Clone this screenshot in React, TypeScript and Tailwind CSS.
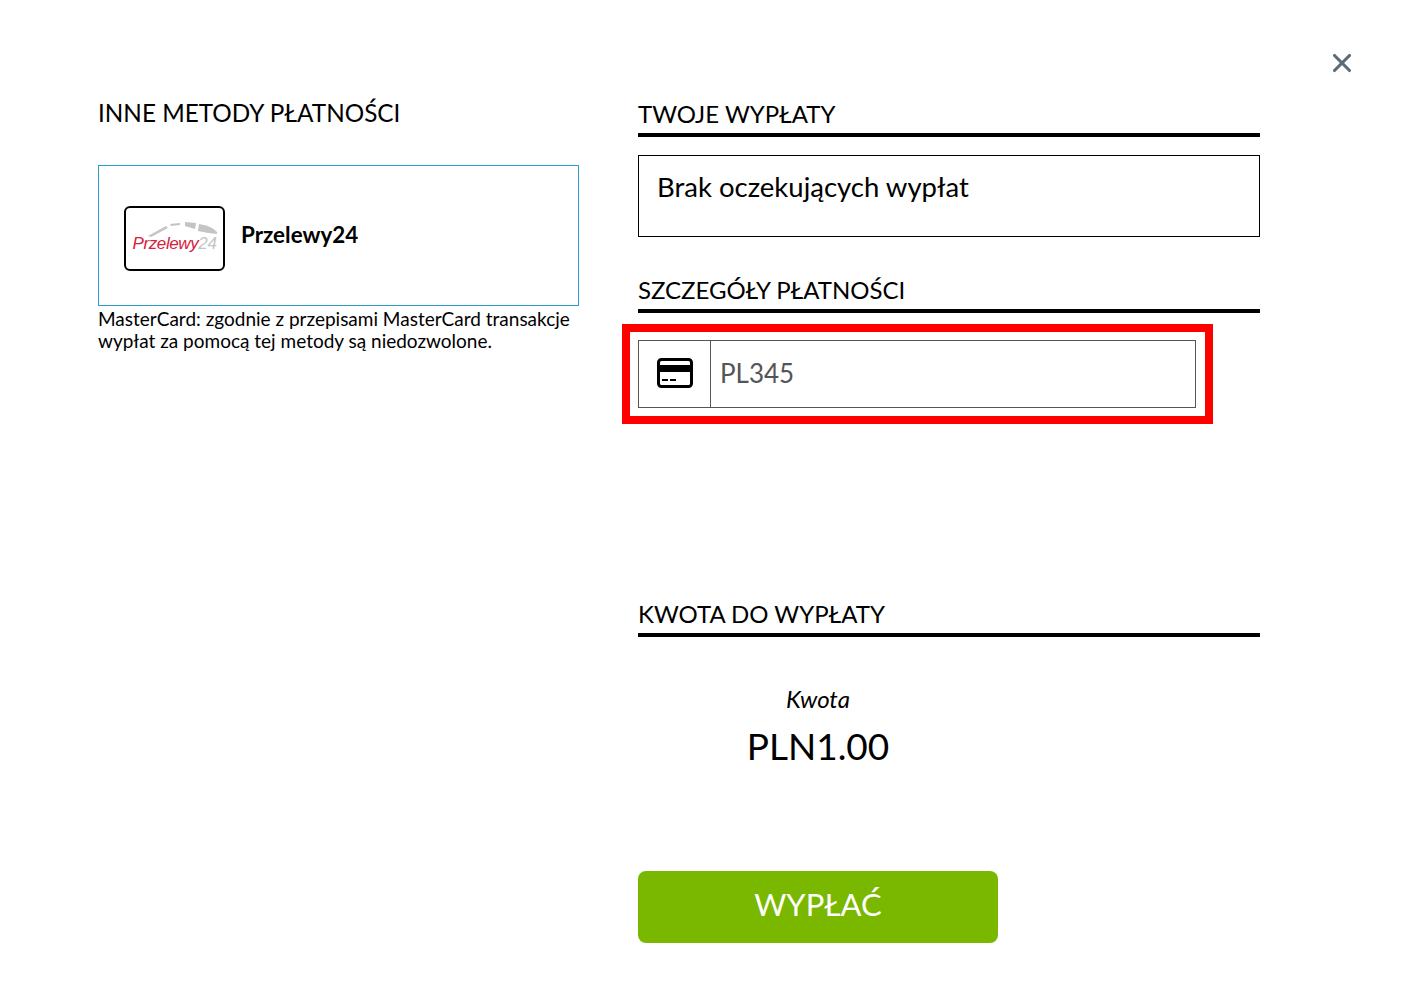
import { X } from 'lucide-react'

function SectionTitle({ children }: { children: string }) {
  return (
    <h2 className="h-[37px] border-b-4 border-black text-[24px] leading-[28px] text-black">{children}</h2>
  )
}

function CardIcon() {
  return (
    <svg className="mb-[3px]" width="36" height="30" viewBox="0 0 36 30" fill="none">
      <rect x="1.5" y="1.5" width="33" height="27" rx="3" stroke="#000" strokeWidth="3" />
      <rect x="2" y="7" width="32" height="7" fill="#000" />
      <rect x="5" y="21" width="6" height="2" fill="#000" />
      <rect x="13" y="21" width="6" height="2" fill="#000" />
    </svg>
  )
}

function P24Logo() {
  return (
    <div className="relative mt-[4px] flex h-[65px] w-[101px] items-end justify-center rounded-md border-2 border-black bg-white pb-[17px]">
      <svg className="absolute left-[20px] top-[13px]" width="76" height="20" viewBox="0 0 76 20" fill="#c4c4c4">
        <path d="M2 15 L20 5 L22 7 L5 16 Z" />
        <path d="M24 3 L34 2 L34 4 L25 5 Z" />
        <path d="M39 1 L50 2 L49 8 L39 5 Z" />
        <path d="M53 3 Q66 5 71 11 L71 13 Q60 12 52 10 Z" />
      </svg>
      <span className="relative whitespace-nowrap font-['Liberation_Sans',sans-serif] text-[17px] italic leading-none tracking-[-0.4px] text-[#d5213a]">
        Przelewy<span className="text-[#c4c4c4]">24</span>
      </span>
    </div>
  )
}

export default function App() {
  return (
    <div className="relative h-[995px] w-[1405px] overflow-hidden bg-white font-['Lato',sans-serif] text-black">
      <button className="absolute left-[1327px] top-[48px] text-[#5b6b78]">
        <X size={30} strokeWidth={2.5} />
      </button>

      <div className="flex pl-[98px] pt-[96px]">
        {/* left column */}
        <div className="w-[481px]">
          <h2 className="h-[69px] text-[24.3px] leading-[33px]">INNE METODY PŁATNOŚCI</h2>
          <div className="flex h-[141px] items-center gap-4 border border-[#2b9fc9] pl-[25px] pt-[1px]">
            <P24Logo />
            <span className="mb-[2px] text-[22.4px] font-bold">Przelewy24</span>
          </div>
          <p className="mt-[2px] text-[19px] leading-[22px]">
            MasterCard: zgodnie z przepisami MasterCard transakcje wypłat za pomocą tej metody są niedozwolone.
          </p>
        </div>

        {/* right column */}
        <div className="ml-[59px] w-[622px] pt-[4px]">
          <SectionTitle>TWOJE WYPŁATY</SectionTitle>
          <div className="mt-[18px] h-[82px] border border-black px-[18px] py-[14px] text-[27.5px] leading-[34px]">
            Brak oczekujących wypłat
          </div>

          <div className="mt-[39px]">
            <SectionTitle>SZCZEGÓŁY PŁATNOŚCI</SectionTitle>
          </div>
          <div className="-ml-[16px] mt-[11px] w-[591px] border-[8px] border-[#ff0000] p-[8px]">
            <div className="flex h-[68px] w-[558px] border border-[#555555]">
              <div className="flex w-[72px] items-center justify-center border-r border-[#555555]">
                <CardIcon />
              </div>
              <div className="flex items-center pb-[2px] pl-[9px] text-[26px] text-[#555555]">PL345</div>
            </div>
          </div>

          <div className="mt-[176px]">
            <SectionTitle>KWOTA DO WYPŁATY</SectionTitle>
          </div>
          <div className="w-[360px] pt-[47px] text-center">
            <div className="text-[24px] italic leading-[30px]">Kwota</div>
            <div className="mt-[8px] text-[37px] leading-[48px]">PLN1.00</div>
          </div>
          <button className="mt-[101px] flex h-[72px] w-[360px] items-center justify-center rounded-lg bg-[#7ab800] pb-[6px] text-[31px] text-white">
            WYPŁAĆ
          </button>
        </div>
      </div>
    </div>
  )
}
